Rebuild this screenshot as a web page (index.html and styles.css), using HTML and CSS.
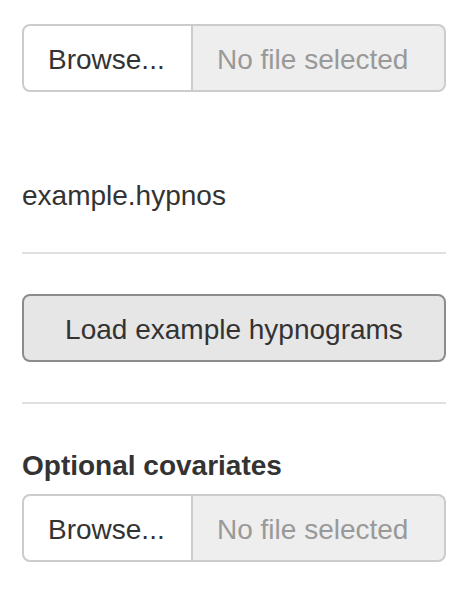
FILE: index.html
```html
<!DOCTYPE html>
<html>
<head>
<meta charset="utf-8">
<link rel="stylesheet" href="styles.css">
</head>
<body>
<div class="panel">
  <div class="input-group">
    <span class="btn-browse">Browse...</span>
    <span class="file-name">No file selected</span>
  </div>
  <p class="filename">example.hypnos</p>
  <hr class="rule">
  <button class="btn-load">Load example hypnograms</button>
  <hr class="rule rule-2">
  <label class="label">Optional covariates</label>
  <div class="input-group">
    <span class="btn-browse">Browse...</span>
    <span class="file-name">No file selected</span>
  </div>
</div>
</body>
</html>
```
FILE: styles.css
```css
html, body {
  margin: 0;
  padding: 0;
  background: #fff;
}
body {
  font-family: "Liberation Sans", Arial, Helvetica, sans-serif;
  font-size: 28px;
  line-height: 40px;
  color: #333;
}
.panel {
  width: 424px;
  padding: 24px 0 0 22px;
  display: flex;
  flex-direction: column;
}
.input-group {
  display: flex;
  height: 68px;
  box-sizing: border-box;
}
.btn-browse {
  box-sizing: border-box;
  width: 171px;
  padding: 14px 0 10px 24px;
  border: 2px solid #ccc;
  border-radius: 8px 0 0 8px;
  background: #fff;
  color: #333;
}
.file-name {
  flex: 1;
  box-sizing: border-box;
  padding: 14px 24px 10px;
  border: 2px solid #ccc;
  border-left: none;
  border-radius: 0 8px 8px 0;
  background: #eee;
  color: #999;
}
.filename {
  margin: 84px 0 0 0;
}
.rule {
  margin: 36px 0 0 0;
  border: none;
  height: 2px;
  background: #e0e0e0;
}
.btn-load {
  margin-top: 40px;
  height: 68px;
  box-sizing: border-box;
  border: 2px solid #8c8c8c;
  border-radius: 8px;
  background: #e6e6e6;
  color: #333;
  font-family: inherit;
  font-size: 28px;
  line-height: 40px;
  padding: 14px 24px 10px;
}
.rule-2 {
  margin-top: 40px;
}
.label {
  margin-top: 42px;
  font-weight: bold;
  margin-bottom: 8px;
}
```
